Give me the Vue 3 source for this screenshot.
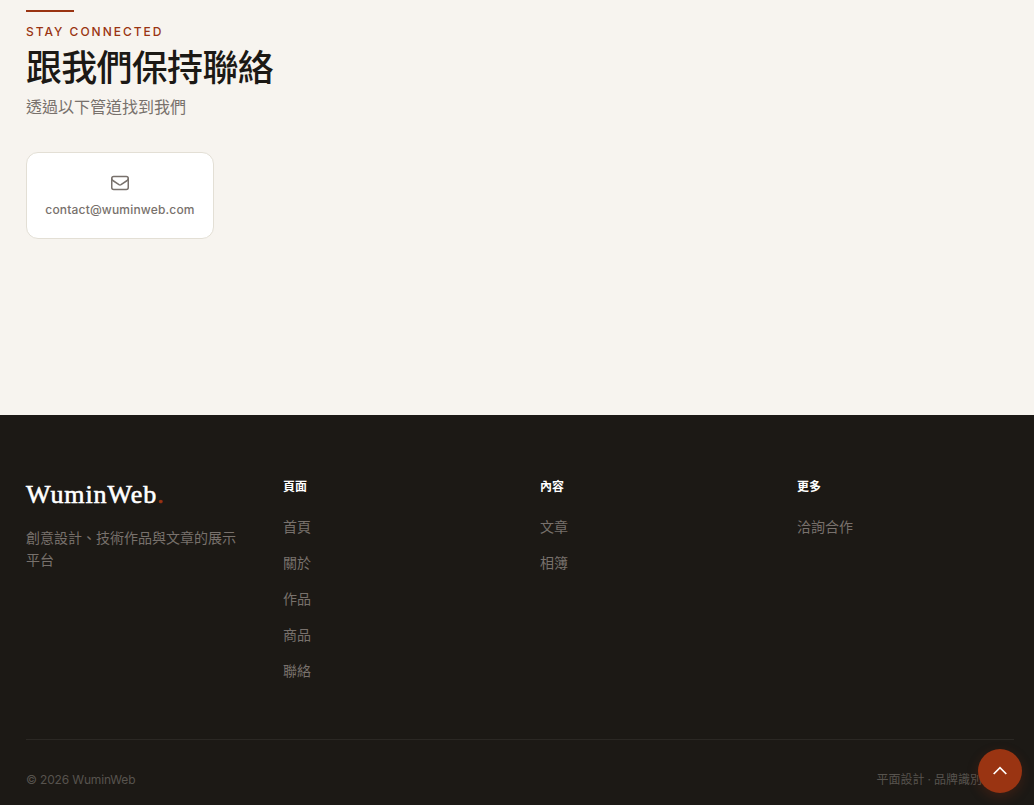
<script setup>
const columns = [
  { title: '頁面', links: ['首頁', '關於', '作品', '商品', '聯絡'] },
  { title: '內容', links: ['文章', '相簿'] },
  { title: '更多', links: ['洽詢合作'] }
];

const scrollToTop = () => {
  window.scrollTo({ top: 0, behavior: 'smooth' });
};
</script>

<template>
  <div class="page">
    <section class="connect">
      <span class="accent-line"></span>
      <p class="eyebrow">STAY CONNECTED</p>
      <h2>跟我們保持聯絡</h2>
      <p class="subtitle">透過以下管道找到我們</p>
      <a class="contact-card" href="mailto:contact@wuminweb.com">
        <svg width="20" height="20" viewBox="0 0 20 20" fill="none" stroke="currentColor" stroke-width="1.5" stroke-linecap="round" stroke-linejoin="round">
          <rect x="1.75" y="3.5" width="16.5" height="13" rx="2" />
          <path d="M1.9 6c.1.7.4 1.1.9 1.5l6.2 4.1c.7.4 1.3.4 2 0l6.2-4.1c.5-.4.8-.8.9-1.5" />
        </svg>
        <span class="email">contact@wuminweb.com</span>
      </a>
    </section>

    <footer class="footer">
      <div class="footer-grid">
        <div class="brand">
          <div class="logo">WuminWeb<span>.</span></div>
          <p>創意設計、技術作品與文章的展示平台</p>
        </div>
        <nav v-for="column in columns" :key="column.title">
          <h4>{{ column.title }}</h4>
          <ul>
            <li v-for="link in column.links" :key="link"><a href="#">{{ link }}</a></li>
          </ul>
        </nav>
      </div>
      <div class="footer-bottom">
        <span class="copyright">© 2026 WuminWeb</span>
        <span class="services">平面設計 · 品牌識別</span>
      </div>
    </footer>

    <button class="back-to-top" aria-label="回到頂部" @click="scrollToTop">
      <svg width="20" height="20" viewBox="0 0 20 20" fill="none" stroke="currentColor" stroke-width="1.7">
        <path d="M3.7 13L10 6.7l6.3 6.3" />
      </svg>
    </button>
  </div>
</template>

<style>
body {
  margin: 0;
  background: #f7f4ef;
}
</style>

<style scoped>
.page {
  height: 805px;
  display: flex;
  flex-direction: column;
  overflow: hidden;
  box-sizing: border-box;
  font-family: Inter, "Noto Sans CJK TC", sans-serif;
  color: #1c1915;
}

h2,
h4,
p,
ul {
  margin: 0;
  padding: 0;
}

a {
  color: inherit;
  text-decoration: none;
}

.connect {
  height: 415px;
  flex-shrink: 0;
  box-sizing: border-box;
  padding: 10px 20px 0 26px;
}

.accent-line {
  display: block;
  width: 48px;
  height: 2px;
  background: #9a3412;
}

.eyebrow {
  margin-top: 11px;
  font-size: 12px;
  line-height: 18px;
  font-weight: 500;
  letter-spacing: 1.98px;
  color: #9a3412;
}

h2 {
  margin-top: 4px;
  font-size: 36px;
  line-height: 47px;
  font-weight: 500;
  letter-spacing: -0.72px;
}

.subtitle {
  margin-top: 3px;
  font-size: 16px;
  line-height: 24px;
  color: #78716c;
}

.contact-card {
  width: 188px;
  height: 87px;
  margin-top: 33px;
  padding-top: 20px;
  box-sizing: border-box;
  display: flex;
  flex-direction: column;
  align-items: center;
  gap: 8px;
  background: #fff;
  border: 1px solid #e3dfd5;
  border-radius: 12px;
  color: #78716c;
}

.email {
  font-size: 12px;
  line-height: 18px;
  font-weight: 500;
  letter-spacing: 0.17px;
  white-space: nowrap;
}

.footer {
  flex: 1;
  padding: 64px 20px 0 26px;
  background: #1c1915;
}

.footer-grid {
  display: grid;
  grid-template-columns: repeat(4, 1fr);
  gap: 40px;
  height: 260px;
}

.logo {
  font-family: "Liberation Serif", serif;
  font-size: 26px;
  line-height: 32px;
  letter-spacing: 0.9px;
  color: #fff;
  -webkit-text-stroke: 0.6px currentColor;
}

.logo span {
  color: #9a3412;
}

.brand p {
  margin-top: 15.5px;
  font-size: 14px;
  line-height: 22.75px;
  color: #78716c;
}

h4 {
  font-size: 12px;
  line-height: 16px;
  font-weight: 700;
  color: #fff;
}

ul {
  margin-top: 20px;
  list-style: none;
}

li {
  height: 36px;
  font-size: 14px;
  line-height: 24px;
  color: #78716c;
}

.footer-bottom {
  display: flex;
  justify-content: space-between;
  border-top: 1px solid #2b2824;
  padding-top: 31px;
  font-size: 12px;
  line-height: 18px;
  color: #57534e;
}

.copyright {
  letter-spacing: -0.16px;
}

.services {
  margin-right: 32px;
  word-spacing: -0.3px;
}

.back-to-top {
  position: fixed;
  right: 12px;
  bottom: 12px;
  width: 44px;
  height: 44px;
  padding: 0;
  display: flex;
  align-items: center;
  justify-content: center;
  border: none;
  border-radius: 50%;
  background: #9a3412;
  color: #fff;
  box-shadow: 0 4px 12px rgba(154, 52, 18, 0.25);
  cursor: pointer;
}
</style>
